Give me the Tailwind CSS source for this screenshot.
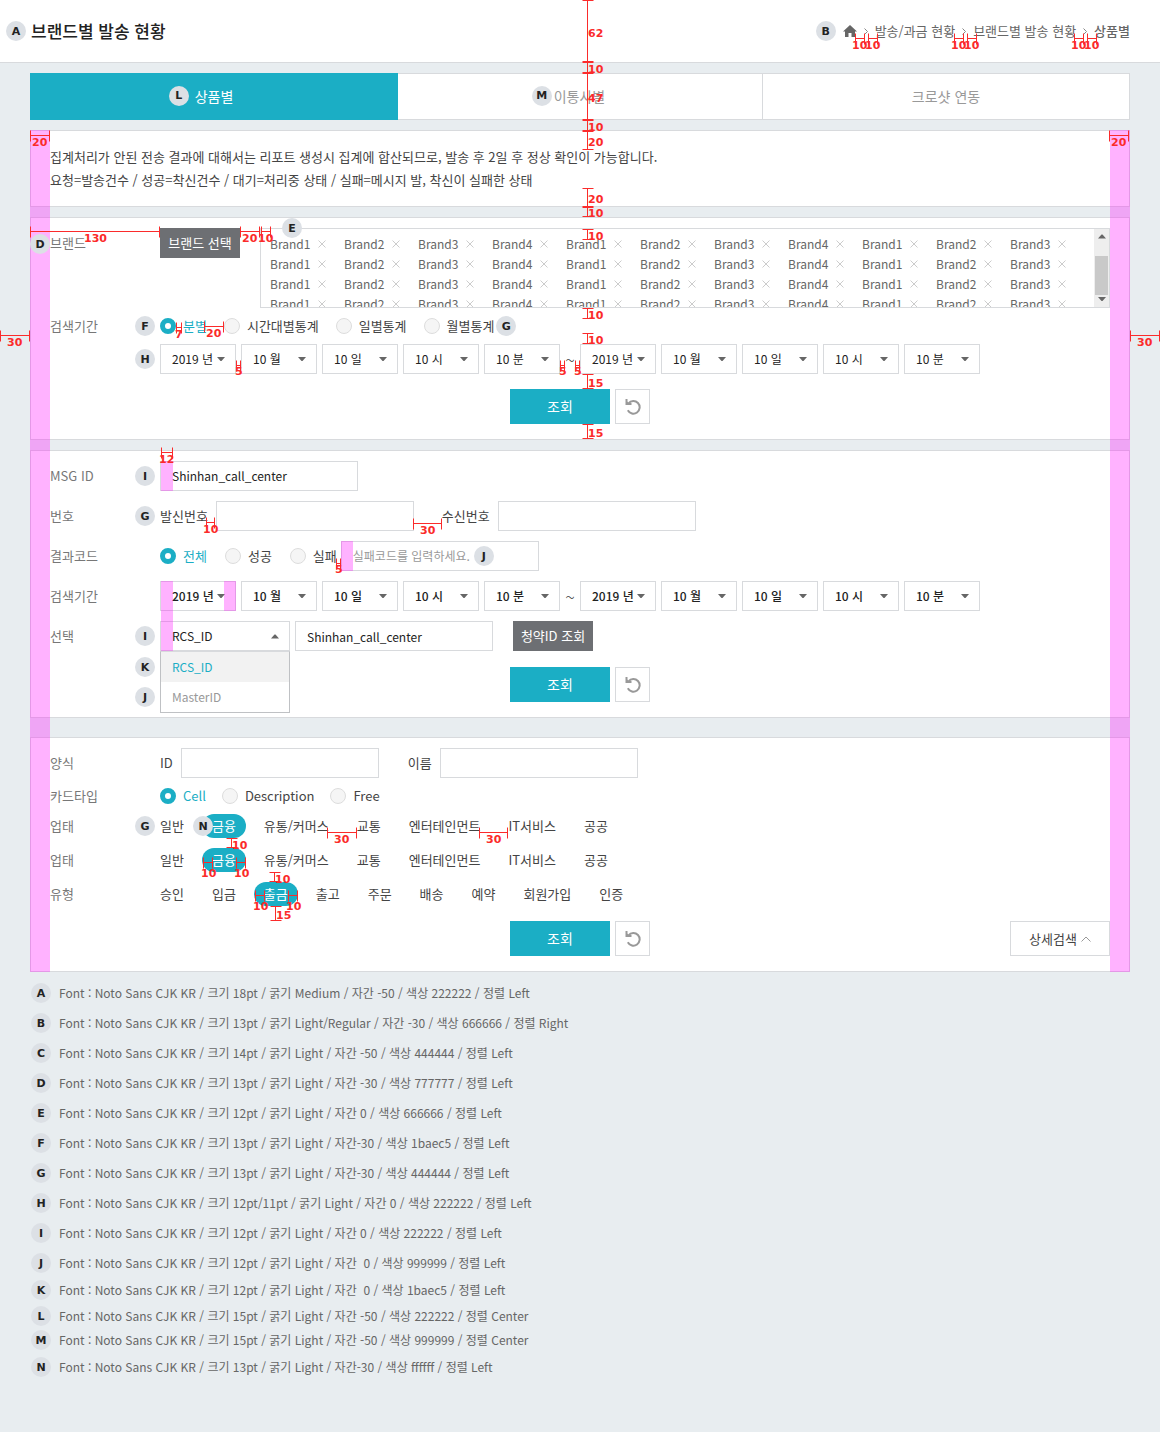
<!DOCTYPE html>
<html lang="ko">
<head>
<meta charset="utf-8">
<meta name="viewport" content="width=device-width, initial-scale=1">
<title>브랜드별 발송 현황</title>
<script src="https://cdn.jsdelivr.net/npm/@tailwindcss/browser@4"></script>
</head>
<body class="relative min-h-screen bg-[#e8edf0] font-['Noto_Sans_CJK_KR',sans-serif] text-[13px] font-normal text-[#444]">

<svg class="hidden" aria-hidden="true">
  <symbol id="down" viewBox="0 0 8 5"><path d="M0 0h8L4.500 4h-1z" fill="#666"/></symbol>
  <symbol id="up" viewBox="0 0 8 5"><path d="M0 4.500h8L4.500 .5h-1z" fill="#666"/></symbol>
  <symbol id="reset" viewBox="0 0 16 16"><path d="M3.500 4.300A6.300 6.300 0 1 1 2.800 11.300" fill="none" stroke="#999" stroke-width="2"/><path d="M.5 0v6h6V4H3.500L2.500 2.500V0z" fill="#999"/></symbol>
  <symbol id="chev" viewBox="0 0 4 7"><path d="M.5 .5l3 3-3 3" fill="none" stroke="#888"/></symbol>
  <symbol id="cross" viewBox="0 0 8 8"><path d="M.5 .5l7 7M7.500 .5l-7 7" stroke="#ccc"/></symbol>
</svg>

<header class="flex h-[63px] items-center justify-between border-b border-[#d8dadd] bg-white pr-[30px] pl-1.5">
  <div class="flex items-center gap-[5px]">
    <i data-badge="A"></i>
    <h1 class="text-[17px] font-medium text-[#222]">브랜드별 발송 현황</h1>
  </div>
  <nav aria-label="현재 위치" class="flex items-center gap-[7px] text-[#666]">
    <i data-badge="B"></i>
    <a href="#" aria-label="홈"><svg class="h-3 w-3.5" viewBox="0 0 14 12"><path d="M7 0l7 6.500h-2V12H8.500V8h-3v4H2V6.500H0z" fill="#666"/></svg></a>
    <svg class="h-[7px] w-1"><use href="#chev"/></svg>
    <a href="#">발송/과금 현황</a>
    <svg class="h-[7px] w-1"><use href="#chev"/></svg>
    <a href="#">브랜드별 발송 현황</a>
    <svg class="h-[7px] w-1"><use href="#chev"/></svg>
    <a href="#" aria-current="page" class="font-medium">상품별</a>
  </nav>
</header>

<div class="mx-[30px] mt-2.5 grid h-[47px] grid-cols-3 border border-[#d8dadd] bg-white text-sm text-[#999]" role="tablist">
  <button role="tab" aria-selected="true" class="-m-px bg-[#1baec5] pb-0.5 text-white"><span class="relative"><span class="absolute top-0 right-full mr-1.5"><i data-badge="L"></i></span>상품별</span></button>
  <button role="tab" aria-selected="false" class="border-r border-[#d8dadd] pb-0.5"><span class="relative"><span class="absolute top-0 right-full mr-0.5"><i data-badge="M"></i></span>이통사별</span></button>
  <button role="tab" aria-selected="false" class="pb-0.5">크로샷 연동</button>
</div>

<main class="relative mx-[30px] mt-2.5">
  <section class="border border-[#d8dadd] bg-white px-[19px] pt-3.5 pb-[15px] text-[13px] leading-[23px]">
    <p>집계처리가 안된 전송 결과에 대해서는 리포트 생성시 집계에 합산되므로, 발송 후 2일 후 정상 확인이 가능합니다.</p>
    <p>요청=발송건수 / 성공=착신건수 / 대기=처리중 상태 / 실패=메시지 발, 착신이 실패한 상태</p>
  </section>

  <form class="mt-2.5 flex flex-col gap-2.5 border border-[#d8dadd] bg-white px-[19px] pt-2.5 pb-[15px]">
    <div class="flex">
      <span class="flex h-[30px] w-[110px] shrink-0 items-center text-[#777]">브랜드</span>
      <button type="button" class="h-[30px] w-20 shrink-0 bg-[#6d6f73] text-white">브랜드 선택</button>
      <div class="relative ml-5 h-20 min-w-0 flex-1 border border-[#d8dadd]">
        <span class="absolute -top-[11px] left-[21px]"><i data-badge="E"></i></span>
        <div class="flex h-full">
          <ul id="brands" class="grid h-full flex-1 auto-rows-[20px] grid-cols-[repeat(auto-fill,74px)] overflow-hidden pt-[5px] pl-[9px] text-xs leading-5 text-[#666]"></ul>
          <div class="flex w-[15px] flex-col items-center justify-between bg-[#eee] py-[5px]" aria-hidden="true">
            <svg class="h-[5px] w-2"><use href="#up"/></svg>
            <div class="mt-3.5 h-[39px] w-[13px] bg-[#c9c9c9]"></div>
            <svg class="h-[5px] w-2"><use href="#down"/></svg>
          </div>
        </div>
      </div>
    </div>
    <div class="flex h-4 items-center">
      <span class="w-[110px] shrink-0 text-[#777]">검색기간</span>
      <div class="relative flex items-center gap-[17px]" data-radios="period" data-items="분별,시간대별통계,일별통계,월별통계">
        <span class="absolute right-full mr-[5px]"><i data-badge="F"></i></span>
        <span class="absolute left-full ml-0.5"><i data-badge="G"></i></span>
      </div>
    </div>
    <div class="relative ml-[110px] flex items-center gap-[5px]" data-dates="조회">
      <span class="absolute right-full mr-[5px]"><i data-badge="H"></i></span>
    </div>
    <div class="mt-[5px] flex justify-center gap-[5px]">
      <button type="button" class="h-[35px] w-[100px] bg-[#1baec5] pb-0.5 text-sm text-white">조회</button>
      <button type="reset" aria-label="초기화" class="flex size-[35px] items-center justify-center border border-[#d8dadd] bg-white"><svg class="size-4"><use href="#reset"/></svg></button>
    </div>
  </form>

  <form class="mt-2.5 flex flex-col gap-2.5 border border-[#d8dadd] bg-white px-[19px] pt-2.5 pb-[15px]">
    <div class="flex items-center">
      <label for="msg" class="w-[110px] shrink-0 text-[#777]">MSG ID</label>
      <div class="relative flex items-center">
        <span class="absolute right-full mr-[5px]"><i data-badge="I"></i></span>
        <input id="msg" value="Shinhan_call_center" class="h-[30px] w-[198px] border border-[#d8dadd] bg-white px-[11px] pb-0.5 text-xs text-[#222]">
        <span class="absolute inset-y-0 left-px w-3 bg-[#ff00ff]/30"></span>
      </div>
    </div>
    <div class="flex items-center">
      <span class="w-[110px] shrink-0 text-[#777]">번호</span>
      <div class="relative flex items-center gap-7">
        <span class="absolute right-full mr-[5px]"><i data-badge="G"></i></span>
        <label class="flex items-center gap-2">발신번호<input class="h-[30px] w-[198px] border border-[#d8dadd] bg-white px-[11px] text-xs"></label>
        <label class="flex items-center gap-2">수신번호<input class="h-[30px] w-[198px] border border-[#d8dadd] bg-white px-[11px] text-xs"></label>
      </div>
    </div>
    <div class="flex items-center">
      <span class="w-[110px] shrink-0 text-[#777]">결과코드</span>
      <div class="flex items-center gap-[18px]" data-radios="result" data-items="전체,성공,실패"></div>
      <div class="relative ml-1 flex items-center">
        <input aria-label="실패코드" placeholder="실패코드를 입력하세요." class="h-[30px] w-[198px] border border-[#d8dadd] bg-white px-[11px] pb-0.5 text-xs placeholder:text-[#999]">
        <span class="absolute inset-y-0 left-0 w-3 bg-[#ff00ff]/30"></span>
        <span class="absolute right-[45px]"><i data-badge="J"></i></span>
      </div>
    </div>
    <div class="flex items-center">
      <span class="w-[110px] shrink-0 text-[#777]">검색기간</span>
      <div class="relative flex items-center gap-[5px] font-medium" data-dates="결과">
        <span class="absolute top-0 left-px z-10 h-[70px] w-3 bg-[#ff00ff]/30"></span>
        <span class="absolute top-0 left-16 z-10 h-[30px] w-3 bg-[#ff00ff]/30"></span>
      </div>
    </div>
    <div class="flex items-center">
      <label for="kind" class="w-[110px] shrink-0 text-[#777]">선택</label>
      <div class="relative flex items-center">
        <span class="absolute right-full mr-[5px]"><i data-badge="I"></i></span>
        <select id="kind" class="h-[30px] w-[130px] appearance-none border border-[#d8dadd] bg-white px-[11px] text-xs text-[#222]"><option>RCS_ID</option><option>MasterID</option></select>
        <svg class="pointer-events-none absolute right-[11px] h-[5px] w-2"><use href="#up"/></svg>
        <ul role="listbox" aria-label="선택" class="absolute top-full left-0 z-10 w-full border border-[#bfc1c4] border-t-[#d8dadd] bg-white text-xs">
          <li role="option" aria-selected="true" class="relative flex h-[30px] items-center bg-[#f2f2f2] px-[11px] text-[#1baec5]"><span class="absolute right-full mr-1.5"><i data-badge="K"></i></span>RCS_ID</li>
          <li role="option" aria-selected="false" class="relative flex h-[30px] items-center px-[11px] text-[#999]"><span class="absolute right-full mr-1.5"><i data-badge="J"></i></span>MasterID</li>
        </ul>
      </div>
      <input aria-label="선택 값" value="Shinhan_call_center" class="ml-[5px] h-[30px] w-[198px] border border-[#d8dadd] bg-white px-[11px] text-xs text-[#222]">
      <button type="button" class="ml-5 h-[30px] w-20 bg-[#6d6f73] text-white">청약ID 조회</button>
    </div>
    <div class="mt-1.5 flex justify-center gap-[5px]">
      <button type="button" class="h-[35px] w-[100px] bg-[#1baec5] pb-0.5 text-sm text-white">조회</button>
      <button type="reset" aria-label="초기화" class="flex size-[35px] items-center justify-center border border-[#d8dadd] bg-white"><svg class="size-4"><use href="#reset"/></svg></button>
    </div>
  </form>

  <form class="mt-[19px] flex flex-col gap-2.5 border border-[#d8dadd] bg-white px-[19px] pt-2.5 pb-[15px]">
    <div class="flex items-center">
      <span class="w-[110px] shrink-0 text-[#777]">양식</span>
      <div class="flex items-center gap-[29px]">
        <label class="flex items-center gap-2">ID<input class="h-[30px] w-[198px] border border-[#d8dadd] bg-white px-[11px] text-xs"></label>
        <label class="flex items-center gap-2">이름<input class="h-[30px] w-[198px] border border-[#d8dadd] bg-white px-[11px] text-xs"></label>
      </div>
    </div>
    <div class="flex h-4 items-center">
      <span class="w-[110px] shrink-0 text-[#777]">카드타입</span>
      <div class="flex items-center gap-4" data-radios="card" data-items="Cell,Description,Free"></div>
    </div>
    <div class="flex items-center">
      <span class="w-[110px] shrink-0 text-[#777]">업태</span>
      <div class="relative -ml-2.5 flex items-center gap-2" data-pills="일반,금융,유통/커머스,교통,엔터테인먼트,IT서비스,공공" data-on="1">
        <span class="absolute right-full -mr-[5px]"><i data-badge="G"></i></span>
        <span class="absolute left-[43px] z-10"><i data-badge="N"></i></span>
      </div>
    </div>
    <div class="flex items-center">
      <span class="w-[110px] shrink-0 text-[#777]">업태</span>
      <div class="-ml-2.5 flex items-center gap-2" data-pills="일반,금융,유통/커머스,교통,엔터테인먼트,IT서비스,공공" data-on="1"></div>
    </div>
    <div class="flex items-center">
      <span class="w-[110px] shrink-0 text-[#777]">유형</span>
      <div class="-ml-2.5 flex items-center gap-2" data-pills="승인,입금,출금,출고,주문,배송,예약,회원가입,인증" data-on="2"></div>
    </div>
    <div class="mt-[5px] grid grid-cols-[1fr_auto_1fr]">
      <div class="col-start-2 flex gap-[5px]">
        <button type="button" class="h-[35px] w-[100px] bg-[#1baec5] pb-0.5 text-sm text-white">조회</button>
        <button type="reset" aria-label="초기화" class="flex size-[35px] items-center justify-center border border-[#d8dadd] bg-white"><svg class="size-4"><use href="#reset"/></svg></button>
      </div>
      <button type="button" class="flex h-[35px] w-[100px] items-center justify-center gap-1 justify-self-end border border-[#d8dadd] bg-white text-[13px]">상세검색<svg class="h-1.5 w-2.5" viewBox="0 0 10 6"><path d="M.5 5.500L5 1l4.500 4.500" fill="none" stroke="#999"/></svg></button>
    </div>
  </form>

  <div class="pointer-events-none absolute inset-y-0 left-0 w-5 bg-[#ff00ff]/30"></div>
  <div class="pointer-events-none absolute inset-y-0 right-0 w-5 bg-[#ff00ff]/30"></div>
  <span class="absolute top-[104px] left-0"><i data-badge="D"></i></span>
</main>

<ul class="ml-[31px] flex flex-col pt-[11px] pb-14 text-xs text-[#666]">
  <li class="mb-2.5 flex h-5 items-center gap-2"><i data-badge="A"></i>Font : Noto Sans CJK KR / 크기 18pt / 굵기 Medium / 자간 -50 / 색상 222222 / 정렬 Left</li>
  <li class="mb-2.5 flex h-5 items-center gap-2"><i data-badge="B"></i>Font : Noto Sans CJK KR / 크기 13pt / 굵기 Light/Regular / 자간 -30 / 색상 666666 / 정렬 Right</li>
  <li class="mb-2.5 flex h-5 items-center gap-2"><i data-badge="C"></i>Font : Noto Sans CJK KR / 크기 14pt / 굵기 Light / 자간 -50 / 색상 444444 / 정렬 Left</li>
  <li class="mb-2.5 flex h-5 items-center gap-2"><i data-badge="D"></i>Font : Noto Sans CJK KR / 크기 13pt / 굵기 Light / 자간 -30 / 색상 777777 / 정렬 Left</li>
  <li class="mb-2.5 flex h-5 items-center gap-2"><i data-badge="E"></i>Font : Noto Sans CJK KR / 크기 12pt / 굵기 Light / 자간 0 / 색상 666666 / 정렬 Left</li>
  <li class="mb-2.5 flex h-5 items-center gap-2"><i data-badge="F"></i>Font : Noto Sans CJK KR / 크기 13pt / 굵기 Light / 자간-30 / 색상 1baec5 / 정렬 Left</li>
  <li class="mb-2.5 flex h-5 items-center gap-2"><i data-badge="G"></i>Font : Noto Sans CJK KR / 크기 13pt / 굵기 Light / 자간-30 / 색상 444444 / 정렬 Left</li>
  <li class="mb-2.5 flex h-5 items-center gap-2"><i data-badge="H"></i>Font : Noto Sans CJK KR / 크기 12pt/11pt / 굵기 Light / 자간 0 / 색상 222222 / 정렬 Left</li>
  <li class="mb-2.5 flex h-5 items-center gap-2"><i data-badge="I"></i>Font : Noto Sans CJK KR / 크기 12pt / 굵기 Light / 자간 0 / 색상 222222 / 정렬 Left</li>
  <li class="mb-[7px] flex h-5 items-center gap-2"><i data-badge="J"></i>Font : Noto Sans CJK KR / 크기 12pt / 굵기 Light / 자간&nbsp; 0 / 색상 999999 / 정렬 Left</li>
  <li class="mb-1.5 flex h-5 items-center gap-2"><i data-badge="K"></i>Font : Noto Sans CJK KR / 크기 12pt / 굵기 Light / 자간&nbsp; 0 / 색상 1baec5 / 정렬 Left</li>
  <li class="mb-1 flex h-5 items-center gap-2"><i data-badge="L"></i>Font : Noto Sans CJK KR / 크기 15pt / 굵기 Light / 자간 -50 / 색상 222222 / 정렬 Center</li>
  <li class="mb-[7px] flex h-5 items-center gap-2"><i data-badge="M"></i>Font : Noto Sans CJK KR / 크기 15pt / 굵기 Light / 자간 -50 / 색상 999999 / 정렬 Center</li>
  <li class="flex h-5 items-center gap-2"><i data-badge="N"></i>Font : Noto Sans CJK KR / 크기 13pt / 굵기 Light / 자간-30 / 색상 ffffff / 정렬 Left</li>
</ul>

<!-- Spacing measures, one layer for each edge they are counted from -->
<svg id="fromLeft" class="pointer-events-none absolute top-0 left-0 z-20 h-px w-px overflow-visible font-['DejaVu_Sans',sans-serif] text-[11px] font-bold"></svg>
<svg id="fromCenter" class="pointer-events-none absolute top-0 left-1/2 z-20 h-px w-px overflow-visible font-['DejaVu_Sans',sans-serif] text-[11px] font-bold"></svg>
<div class="pointer-events-none absolute top-0 right-0 z-20 h-px w-0"><svg id="fromRight" class="h-px w-px overflow-visible font-['DejaVu_Sans',sans-serif] text-[11px] font-bold"></svg></div>

<script>
document.querySelectorAll('[data-badge]').forEach(e => {
  e.className = "flex size-5 shrink-0 items-center justify-center rounded-full bg-[#dce0e5] font-['DejaVu_Sans',sans-serif] text-[11px] leading-none font-bold text-[#222] not-italic";
  e.textContent = e.dataset.badge;
});

let brands = '';
for (let r = 0; r < 4; r++) for (let c = 0; c < 11; c++) {
  const name = 'Brand' + (c % 4 + 1);
  brands += `<li class="flex items-center gap-2">${name}<button type="button" aria-label="${name} 삭제"><svg class="size-2"><use href="#cross"/></svg></button></li>`;
}
document.getElementById('brands').innerHTML = brands;

document.querySelectorAll('[data-radios]').forEach(e => {
  e.insertAdjacentHTML('beforeend', e.dataset.items.split(',').map((t, i) =>
    `<label class="flex items-center gap-[7px] has-checked:text-[#1baec5]"><input type="radio" name="${e.dataset.radios}" ${i ? '' : 'checked'} class="size-4 appearance-none rounded-full border border-[#ddd] bg-[#f5f5f5] checked:border-[5px] checked:border-[#1baec5] checked:bg-white">${t}</label>`).join(''));
});

document.querySelectorAll('[data-dates]').forEach(e => {
  const group = when => ['2019 년', '10 월', '10 일', '10 시', '10 분'].map(t =>
    `<span class="relative flex items-center"><select aria-label="${e.dataset.dates} ${when} ${t.split(' ')[1]}" class="h-[30px] w-[76px] appearance-none border border-[#d8dadd] bg-white px-[11px] text-xs text-[#222]"><option>${t}</option></select><svg class="pointer-events-none absolute right-[11px] h-[5px] w-2"><use href="#down"/></svg></span>`).join('');
  e.insertAdjacentHTML('beforeend', group('시작') + '<span class="flex w-2.5 justify-center text-lg leading-none font-light">~</span>' + group('종료'));
});

document.querySelectorAll('[data-pills]').forEach(e => {
  e.insertAdjacentHTML('beforeend', e.dataset.pills.split(',').map((t, i) =>
    `<button type="button" aria-pressed="${i == e.dataset.on}" class="h-6 rounded-full px-2.5 aria-pressed:bg-[#1baec5] aria-pressed:text-white">${t}</button>`).join(''));
});

// [axis, start, end, cross position, label, label x, label baseline]
const measures = {
  fromLeft: [
    ['h',30,49,135,20,32,146],['h',30,159,231,130,84,242],['h',240,259,231,20,242,242],['h',261,270,231,10,258,242],
    ['h',0,29,335,30,7,346],['h',176,181,327,7,175,338],['h',204,223,326,20,206,337],
    ['h',236,240,365,5,235,375],['h',560,564,365,5,559,375],['h',575,579,365,5,574,375],
    ['h',161,172,452,12,159,463],['h',206,214,522,10,203,533],['h',413,441,523,30,420,534],['h',336,340,563,5,335,573],
    ['h',327,356,832,30,334,843],['h',479,507,832,30,486,843],['h',203,212,862,10,201,877],['h',236,245,862,10,234,877],
    ['v',838,847,231,10,232,849],['h',255,264,895,10,253,910],['h',288,297,895,10,286,910],
    ['v',872,881,274,10,275,883],['v',906,920,275,15,276,919]],
  fromCenter: [
    ['v',0,61,7,62,8,37],['v',62,72,7,10,8,73],['v',73,119,7,47,8,102],['v',120,130,7,10,8,131],['v',131,149,7,20,8,146],
    ['v',188,206,7,20,8,203],['v',207,216,7,10,8,217],['v',229,239,7,10,8,240],['v',308,318,7,10,8,319],['v',333,343,7,10,8,344],
    ['v',374,388,7,15,8,387],['v',424,438,7,15,8,437]],
  fromRight: [
    ['h',-51,-32,135,20,-49,146],['h',-30,-1,335,30,-23,346],
    ['h',-305,-296,38,10,-308,49],['h',-292,-283,38,10,-295,49],['h',-206,-197,38,10,-209,49],['h',-193,-184,38,10,-196,49],
    ['h',-86,-77,38,10,-89,49],['h',-73,-64,38,10,-76,49]]
};
for (const [id, list] of Object.entries(measures)) {
  document.getElementById(id).innerHTML = list.map(([axis, a, b, c, label, x, y]) => {
    const d = axis === 'h'
      ? `M${a} ${c - 5}v11M${b} ${c - 5}v11M${a} ${c}H${b}`
      : `M${c - 5} ${a}h11M${c - 5} ${b}h11M${c} ${a}V${b}`;
    return `<path d="${d}" transform="translate(.5 .5)" stroke="#fb2b2b" fill="none"/><text x="${x}" y="${y}" fill="#fb2b2b">${label}</text>`;
  }).join('');
}
</script>
</body>
</html>
